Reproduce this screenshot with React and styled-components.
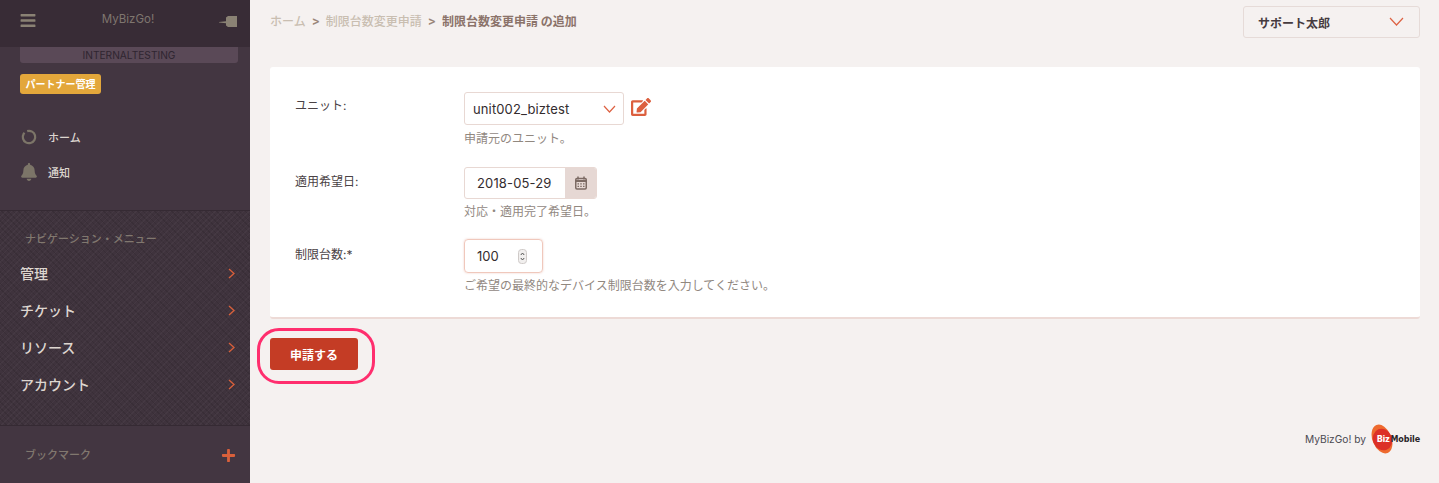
import React from "react";
import styled, { createGlobalStyle } from "styled-components";
import { FaBars, FaBell, FaPlus, FaEdit } from "react-icons/fa";

const FONT = `Inter, "Noto Sans CJK JP", sans-serif`;

const Global = createGlobalStyle`
  html, body { margin: 0; padding: 0; height: 100%; background: #f5f1f0; }
  body { font-family: ${FONT}; overflow: hidden; }
  * { box-sizing: border-box; }
`;

const Page = styled.div`
  display: flex;
  width: 1439px;
  height: 483px;
`;

const Sidebar = styled.aside`
  width: 250px;
  flex: none;
  display: flex;
  flex-direction: column;
  background: #433641;
`;

const SideHeader = styled.div`
  height: 47px;
  background: #382c36;
  display: flex;
  align-items: center;
  justify-content: space-between;
  padding: 0 13px 0 20px;
  color: #8a8274;
`;

const MenuIcon = styled(FaBars)`
  width: 16px;
  height: 17px;
  margin-top: -7px;
`;

const Brand = styled.span`
  font-size: 11.5px;
  color: #7f766f;
  margin: -9px 0 0 1px;
`;

const PinIcon = styled.svg`
  width: 18px;
  height: 13px;
  margin-top: -3px;
  fill: currentColor;
`;

const EnvBar = styled.div`
  margin: 0 12px 0 20px;
  height: 16px;
  line-height: 16px;
  background: #5a4957;
  border-radius: 0 0 3px 3px;
  text-align: center;
  font-size: 10.2px;
  color: #2f2530;
`;

const Badge = styled.span`
  align-self: flex-start;
  margin: 11px 0 0 20px;
  height: 20px;
  line-height: 20px;
  padding: 0 5.5px;
  background: #e3a73b;
  border-radius: 3px;
  font-size: 10px;
  font-weight: 700;
  color: #fff;
`;

const TopLinks = styled.div`
  display: flex;
  flex-direction: column;
  gap: 15px;
  padding: 33px 0 0 20px;
  height: 116px;
`;

const TopLink = styled.div`
  display: flex;
  align-items: center;
  gap: 10px;
  height: 20px;
  font-size: 11px;
  font-weight: 500;
  color: #dcd5cf;
  svg { width: 18px; height: 18px; color: #7c7568; flex: none; }
`;

const NavSection = styled.nav`
  height: 216px;
  border-top: 1px solid #352a33;
  border-bottom: 1px solid #352a33;
  padding: 19px 12px 0 20px;
  background-color: #3f333d;
  background-image:
    repeating-linear-gradient(135deg, rgba(255, 255, 255, 0.03) 0 1px, transparent 1px 4px),
    repeating-linear-gradient(45deg, rgba(0, 0, 0, 0.1) 0 1px, transparent 1px 4px);
`;

const SectionTitle = styled.div`
  font-size: 11px;
  font-weight: 500;
  color: #81786f;
  padding-left: 5px;
  margin: ${p => (p.$bookmark ? "0" : "0 0 8px")};
`;

const NavItem = styled.div`
  height: 37px;
  display: flex;
  align-items: center;
  justify-content: space-between;
  font-size: 14px;
  font-weight: 500;
  color: #ddd6d0;
`;

const Chevron = styled.svg`
  width: 7px;
  height: 11px;
  fill: none;
  stroke: #d9603b;
  stroke-width: 1.3;
  margin: 2px 3px 0 0;
`;

const BookmarkRow = styled.div`
  display: flex;
  align-items: center;
  justify-content: space-between;
  padding: 19px 14px 0 20px;
  svg { width: 15px; height: 15px; color: #d9603b; margin-top: 3px; }
`;

const Main = styled.main`
  flex: 1;
  display: flex;
  flex-direction: column;
  padding: 6px 19px 0 20px;
`;

const TopBar = styled.div`
  height: 32px;
  display: flex;
  align-items: center;
  justify-content: space-between;
`;

const Crumbs = styled.div`
  display: flex;
  align-items: center;
  gap: 6px;
  margin-top: -3px;
  font-size: 12px;
  font-weight: 500;
  color: #c9beb1;
`;

const CrumbSep = styled.span`
  color: #9a8679;
  font-size: 12px;
  font-weight: 700;
`;

const CrumbCurrent = styled.span`
  color: #8b736a;
  font-weight: 700;
`;

const UserMenu = styled.div`
  width: 177px;
  height: 32px;
  border: 1px solid #e6dbd8;
  border-radius: 3px;
  display: flex;
  align-items: center;
  justify-content: space-between;
  padding: 0 15px 0 14px;
  font-size: 12px;
  font-weight: 700;
  color: #463b3f;
`;

const Caret = styled.svg`
  width: ${p => p.$w}px;
  height: ${p => p.$h}px;
  fill: none;
  stroke: #dd6243;
  stroke-width: 1.2;
  flex: none;
  margin-top: ${p => p.$up || 0}px;
`;

const Card = styled.section`
  margin-top: 29px;
  height: 252px;
  background: #fff;
  border-radius: 3px;
  border-bottom: 2px solid #eddad6;
  padding: 25px 25px 0;
`;

const Row = styled.div`
  display: grid;
  grid-template-columns: 169px 1fr;
  height: ${p => p.$h}px;
`;

const Label = styled.label`
  font-size: 12px;
  color: #4a4245;
  line-height: 16px;
  padding-top: ${p => p.$top}px;
`;

const Controls = styled.div`
  display: flex;
  align-items: center;
  gap: 7px;
`;

const Help = styled.div`
  font-size: 12px;
  line-height: 14px;
  color: #91887f;
  margin-top: ${p => p.$gap}px;
`;

const Select = styled.div`
  width: 160px;
  height: 33px;
  border: 1px solid #e8d8d3;
  border-radius: 3px;
  display: flex;
  align-items: center;
  justify-content: space-between;
  padding: 0 7px 0 8px;
  font-size: 13px;
  letter-spacing: 0.12px;
  color: #332c2e;
`;

const DateGroup = styled.div`
  display: flex;
  width: 133px;
  height: 32px;
  border: 1px solid #e8d8d3;
  border-radius: 3px;
  overflow: hidden;
`;

const DateValue = styled.div`
  flex: 1;
  font-size: 13px;
  letter-spacing: 0.15px;
  line-height: 30px;
  padding-left: 12px;
  color: #332c2e;
`;

const DateAddon = styled.div`
  width: 31px;
  background: #e6d8d4;
  display: flex;
  align-items: center;
  justify-content: center;
`;

const CalendarIcon = styled.svg`
  width: 12px;
  height: 14px;
  fill: none;
  stroke: #7c6a63;
`;

const NumberBox = styled.div`
  width: 79px;
  height: 34px;
  border: 1px solid #f0c8bc;
  border-radius: 4px;
  box-shadow: 0 0 2px rgba(224, 150, 130, 0.5);
  display: flex;
  align-items: center;
  justify-content: space-between;
  padding: 0 15px 0 12px;
  font-size: 13px;
  color: #332c2e;
`;

const Spinner = styled.svg`
  width: 9px;
  height: 15px;
  fill: none;
`;

const EditIcon = styled(FaEdit)`
  width: 20px;
  height: 18px;
  color: #dc5f3e;
  margin-top: -4px;
`;

const Submit = styled.button`
  margin: 19px 0 0;
  width: 88px;
  height: 32px;
  background: #c43c25;
  border: none;
  border-radius: 3px;
  color: #fff;
  font-family: ${FONT};
  font-size: 12px;
  font-weight: 700;
  padding: 0;
`;

const SubmitWrap = styled.div`
  position: relative;
  align-self: flex-start;
`;

const Ring = styled.div`
  position: absolute;
  left: -13px;
  top: 9px;
  width: 118px;
  height: 56px;
  border: 3px solid #ff2e6e;
  border-radius: 22px;
`;

const Footer = styled.div`
  margin-top: 54px;
  display: flex;
  justify-content: flex-end;
  align-items: center;
  font-size: 10.2px;
  color: #4b4a50;
`;

const LogoMark = styled.div`
  position: relative;
  display: flex;
  align-items: center;
  margin-left: 4px;
  width: 50px;
  height: 30px;
  svg { position: absolute; left: 0; top: 0; }
`;

const LogoBiz = styled.span`
  position: relative;
  margin-left: 7px;
  font-size: 8.5px;
  font-weight: 800;
  color: #fff;
`;

const LogoMobile = styled.span`
  position: relative;
  font-family: "DejaVu Sans", sans-serif;
  font-size: 8px;
  font-weight: 700;
  color: #2a2527;
  margin-left: 0.5px;
  letter-spacing: -0.1px;
`;

const navItems = ["管理", "チケット", "リソース", "アカウント"];

const App = () => (
  <Page>
    <Global />
    <Sidebar>
      <SideHeader>
        <MenuIcon />
        <Brand>MyBizGo!</Brand>
        <PinIcon viewBox="0 0 18 13">
          <path d="M0 6l7-0.8V1.5L9 0h9v11H9l-2-1.5V7.2L0 6.5z" />
        </PinIcon>
      </SideHeader>
      <EnvBar>INTERNALTESTING</EnvBar>
      <Badge>パートナー管理</Badge>
      <TopLinks>
        <TopLink>
          <svg viewBox="0 0 18 18">
            <circle cx="9" cy="9" r="6.2" fill="none" stroke="currentColor" strokeWidth="2.2" strokeDasharray="30 3" transform="rotate(-60 9 9)" />
          </svg>
          ホーム
        </TopLink>
        <TopLink>
          <FaBell />
          通知
        </TopLink>
      </TopLinks>
      <NavSection>
        <SectionTitle>ナビゲーション・メニュー</SectionTitle>
        {navItems.map(item => (
          <NavItem key={item}>
            {item}
            <Chevron viewBox="0 0 7 11">
              <path d="M1 1l5 4.5L1 10" />
            </Chevron>
          </NavItem>
        ))}
      </NavSection>
      <BookmarkRow>
        <SectionTitle $bookmark>ブックマーク</SectionTitle>
        <FaPlus />
      </BookmarkRow>
    </Sidebar>
    <Main>
      <TopBar>
        <Crumbs>
          <span>ホーム</span>
          <CrumbSep>&gt;</CrumbSep>
          <span>制限台数変更申請</span>
          <CrumbSep>&gt;</CrumbSep>
          <CrumbCurrent>制限台数変更申請 の追加</CrumbCurrent>
        </Crumbs>
        <UserMenu>
          サポート太郎
          <Caret $w={15} $h={9} $up={-2} viewBox="0 0 15 9">
            <path d="M1 1l6.5 7L14 1" />
          </Caret>
        </UserMenu>
      </TopBar>
      <Card>
        <Row $h={75}>
          <Label $top={6}>ユニット:</Label>
          <div>
            <Controls>
              <Select>
                unit002_biztest
                <Caret $w={13} $h={8} viewBox="0 0 13 8">
                  <path d="M1 1l5.5 6L12 1" />
                </Caret>
              </Select>
              <EditIcon />
            </Controls>
            <Help $gap={7}>申請元のユニット。</Help>
          </div>
        </Row>
        <Row $h={72}>
          <Label $top={7}>適用希望日:</Label>
          <div>
            <DateGroup>
              <DateValue>2018-05-29</DateValue>
              <DateAddon>
                <CalendarIcon viewBox="0 0 12 14">
                  <rect x="0.75" y="2.5" width="10.5" height="10.5" rx="1.2" strokeWidth="1.5" />
                  <path d="M3 0.5v3M9 0.5v3" strokeWidth="1.5" />
                  <path d="M1 5h10" strokeWidth="2" />
                  <path d="M2.5 7.8h7M2.5 10.3h7" strokeWidth="1.3" strokeDasharray="1.5 1.25" />
                </CalendarIcon>
              </DateAddon>
            </DateGroup>
            <Help $gap={6}>対応・適用完了希望日。</Help>
          </div>
        </Row>
        <Row $h={70}>
          <Label $top={8}>制限台数:*</Label>
          <div>
            <NumberBox>
              100
              <Spinner viewBox="0 0 9 15">
                <rect x="0.5" y="0.5" width="8" height="14" rx="3" fill="#f1efee" stroke="#cfcac8" />
                <path d="M2.8 6l1.7-2 1.7 2M2.8 9l1.7 2 1.7-2" stroke="#555" />
              </Spinner>
            </NumberBox>
            <Help $gap={6}>ご希望の最終的なデバイス制限台数を入力してください。</Help>
          </div>
        </Row>
      </Card>
      <SubmitWrap>
        <Submit>申請する</Submit>
        <Ring />
      </SubmitWrap>
      <Footer>
        MyBizGo! by
        <LogoMark>
          <svg width="26" height="30" viewBox="0 0 26 30">
            <ellipse cx="12" cy="15" rx="9.5" ry="15" transform="rotate(-22 12 15)" fill="#ee6a2e" />
            <ellipse cx="12.5" cy="15.5" rx="9.5" ry="11" transform="rotate(-22 12.5 15.5)" fill="#dc3027" />
          </svg>
          <LogoBiz>Biz</LogoBiz>
          <LogoMobile>Mobile</LogoMobile>
        </LogoMark>
      </Footer>
    </Main>
  </Page>
);

export default App;
